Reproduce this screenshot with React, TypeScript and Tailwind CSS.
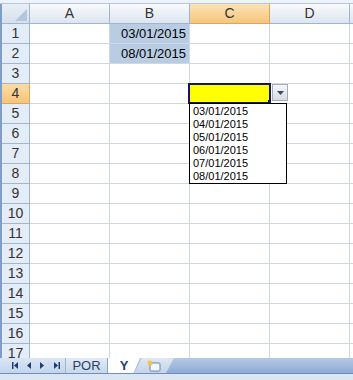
import React from "react";

const rowNums = Array.from({ length: 17 }, (_, i) => i + 1);
const cols = ["A", "B", "C", "D"];
const values: Record<string, string> = { "1B": "03/01/2015", "2B": "08/01/2015" };
const listItems = ["03/01/2015", "04/01/2015", "05/01/2015", "06/01/2015", "07/01/2015", "08/01/2015"];

function NavArrows() {
  return (
    <svg width="66" height="15" viewBox="0 0 66 15" className="shrink-0">
      <g fill="#1f3d74">
        <rect x="12" y="4" width="1.5" height="7" />
        <polygon points="18,4 18,11 14,7.5" />
        <polygon points="31,4 31,11 27,7.5" />
        <polygon points="40,4 40,11 44,7.5" />
        <polygon points="54,4 54,11 58,7.5" />
        <rect x="58.5" y="4" width="1.5" height="7" />
      </g>
    </svg>
  );
}

export default function App() {
  return (
    <div className="relative w-[353px] h-[380px] overflow-hidden bg-white font-['Liberation_Sans',sans-serif] text-[13px] text-black">
      {/* top strip */}
      <div className="h-[4px] bg-[#eef3f9] border-b border-[#b9c9dd]" />

      <div className="flex h-[354px] overflow-hidden">
        <div className="w-[2px] shrink-0 bg-[#7f9dc7]" />
        <div className="flex-1">
          {/* column header */}
          <div className="flex h-[20px]">
            <div className="w-[28px] shrink-0 border-r border-b border-[#9eb6ce] bg-gradient-to-b from-[#e9eff7] to-[#d6e0ee] flex items-end justify-end p-[2px]">
              <svg width="12" height="12" viewBox="0 0 12 12">
                <polygon points="12,0 12,12 0,12" fill="#b4c6de" />
              </svg>
            </div>
            {cols.map((c) => (
              <div
                key={c}
                className={`w-[80px] shrink-0 border-r border-b flex items-center justify-center text-[14px] text-[#333] ${
                  c === "C"
                    ? "bg-gradient-to-b from-[#fbe3b5] to-[#f6c57a] border-[#d9a85c]"
                    : "bg-gradient-to-b from-[#f8fafd] to-[#dde5f0] border-[#9eb6ce]"
                }`}
              >
                {c}
              </div>
            ))}
            <div className="flex-1 border-b border-[#9eb6ce] bg-gradient-to-b from-[#f8fafd] to-[#dde5f0]" />
          </div>

          {rowNums.map((r) => (
            <div key={r} className="flex h-[20px]">
              <div
                className={`w-[28px] shrink-0 border-r border-b flex items-center justify-center text-[14px] text-[#333] ${
                  r === 4
                    ? "bg-gradient-to-b from-[#fbdca5] to-[#f6c57a] border-[#d9a85c]"
                    : "bg-[#e4ecf7] border-[#9eb6ce]"
                }`}
              >
                {r}
              </div>
              {cols.map((c) => {
                const v = values[`${r}${c}`];
                return (
                  <div
                    key={c}
                    className={`w-[80px] shrink-0 border-r border-b border-[#d0d7e5] flex items-center justify-end pr-[3px] ${
                      v ? "bg-[#b8cce4]" : ""
                    } ${r === 4 && c === "C" ? "bg-[#ffff00]" : ""}`}
                  >
                    {v}
                  </div>
                );
              })}
              <div className="flex-1 border-b border-[#d0d7e5]" />
            </div>
          ))}
        </div>
      </div>

      {/* active cell frame */}
      <div className="absolute left-[188px] top-[83px] w-[83px] h-[21px] border-[2px] border-[#10156b]" />
      <div className="absolute left-[268px] top-[100px] w-[3px] h-[4px] bg-[#10156b]" />

      {/* dropdown button */}
      <div className="absolute left-[272px] top-[84px] w-[16px] h-[17px] border border-[#a5acb5] bg-gradient-to-b from-[#f5f6f8] to-[#d8dce2] flex items-center justify-center">
        <svg width="7" height="4" viewBox="0 0 7 4">
          <polygon points="0,0 7,0 3.5,4" fill="#3a4a66" />
        </svg>
      </div>

      {/* validation list */}
      <div className="absolute left-[189px] top-[103px] w-[98px] h-[81px] border border-black bg-white pt-[1px] pl-[3px] text-[11px] leading-[13px]">
        {listItems.map((d) => (
          <div key={d}>{d}</div>
        ))}
      </div>

      {/* sheet tabs bar */}
      <div className="flex h-[16px] bg-gradient-to-b from-[#b5c9e6] to-[#8eabd6] border-b border-[#6f8fbd]">
        <div className="w-[66px] shrink-0 bg-gradient-to-b from-[#dbe6f4] to-[#c2d4ec] border-r border-[#9eb6ce] flex items-center">
          <NavArrows />
        </div>
        <div className="w-[42px] shrink-0 bg-gradient-to-b from-[#e2eaf5] to-[#c8d7ec] border-r border-[#8aa4c8] flex items-center justify-center text-[13px] text-[#2a3f63]">
          POR
        </div>
        <div className="w-[32px] shrink-0 bg-white flex items-center justify-center text-[13px] font-bold text-[#1f3d74] [clip-path:polygon(0_0,100%_0,80%_100%,0_100%)]">
          Y
        </div>
        <div className="relative -ml-[6px] w-[40px] shrink-0 bg-gradient-to-b from-[#dfe8f4] to-[#c3d4ea] flex items-center justify-center [clip-path:polygon(20%_0,100%_0,80%_100%,0_100%)]">
          <svg width="14" height="12" viewBox="0 0 14 12">
            <rect x="3" y="3" width="10" height="8" rx="1" fill="#f4f7fb" stroke="#6d84a6" />
            <circle cx="3" cy="3" r="2.5" fill="#f6c445" />
          </svg>
        </div>
        <div className="flex-1" />
      </div>
      <div className="h-[6px] bg-[#dbe6f4]" />
    </div>
  );
}
